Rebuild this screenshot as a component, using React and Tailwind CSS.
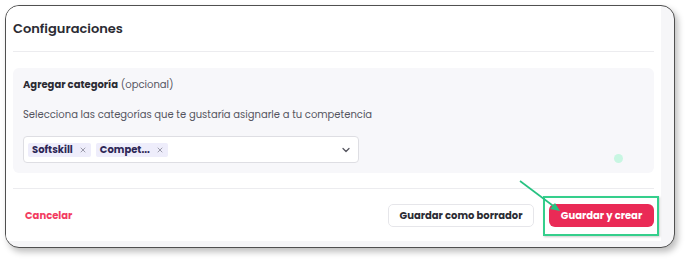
import { ChevronDown, X } from 'lucide-react';

const chips = ['Softskill', 'Compet...'];

function Chip({ label }) {
  return (
    <span className="flex items-center gap-[6px] h-[14px] px-[4px] rounded-[2px] bg-[#eeedfb] text-[10px] font-bold text-[#2d2656] leading-none">
      {label}
      <X size={8} strokeWidth={2.5} className="text-[#8a8a99]" />
    </span>
  );
}

export default function App() {
  return (
    <div className="w-[688px] h-[260px] bg-white pt-[5px] pl-[5px]" style={{ fontFamily: 'Poppins, "Noto Sans", sans-serif' }}>
      <div className="relative w-[670px] h-[243px] rounded-[14px] border border-[#505050] bg-[#f6f6f8] shadow-[3px_4px_6px_rgba(0,0,0,0.25)] overflow-hidden">
        <div className="h-[235px] w-[655px] bg-white pl-[7px] pr-[7px] rounded-tl-[13px]">
          {/* Header */}
          <div className="h-[46px] flex items-center border-b border-[#ececef]">
            <h2 className="text-[13px] font-semibold text-[#2b2b33]">Configuraciones</h2>
          </div>

          {/* Category panel */}
          <div className="mt-[16px] h-[105px] rounded-[6px] bg-[#f7f7fa] px-[10px] pt-[9px]">
            <p className="text-[10px] text-[#2b2b33] leading-[16px]">
              <span className="font-bold">Agregar categoría</span> <span className="text-[#55555f]">(opcional)</span>
            </p>
            <p className="mt-[14px] text-[10px] text-[#55555f] leading-[16px]">
              Selecciona las categorías que te gustaría asignarle a tu competencia
            </p>
            <div className="mt-[13px] w-[336px] h-[27px] rounded-[4px] border border-[#dedee3] bg-white flex items-center pl-[4px] pr-[6px]">
              <div className="flex items-center gap-[5px] flex-1">
                {chips.map((c) => (
                  <Chip key={c} label={c} />
                ))}
              </div>
              <ChevronDown size={12} strokeWidth={2.5} className="text-[#55555f]" />
            </div>
          </div>

          {/* Footer */}
          <div className="mt-[15px] border-t border-[#ececef] flex items-center h-[52px] pt-[1px]">
            <button className="ml-[12px] text-[10px] font-bold text-[#f23c61]">Cancelar</button>
            <div className="ml-auto flex items-center gap-[15px]">
              <button className="h-[23px] w-[146px] rounded-[5px] border border-[#e6e6ea] bg-white text-[10px] font-bold text-[#2b2b33]">
                Guardar como borrador
              </button>
              <button className="h-[23px] w-[105px] rounded-[6px] bg-[#ea2a56] text-[10px] font-bold text-white">
                Guardar y crear
              </button>
            </div>
          </div>
        </div>

        {/* Annotations */}
        <span className="absolute left-[608px] top-[148px] w-[9px] h-[9px] rounded-full bg-[#c8f6e2]" />
        <span className="absolute left-[537px] top-[190px] w-[116px] h-[40px] border-2 border-[#35cf8c] shadow-[1px_1px_2px_rgba(0,0,0,0.2)]" />
        <svg className="absolute left-[510px] top-[170px]" width="50" height="40" viewBox="0 0 50 40">
          <line x1="4" y1="5" x2="40" y2="32" stroke="#27c281" strokeWidth="1.6" />
          <polygon points="44,35 34,33 39,27" fill="#27c281" />
        </svg>
      </div>
    </div>
  );
}
